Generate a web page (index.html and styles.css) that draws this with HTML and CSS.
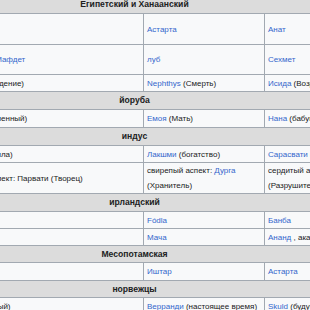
FILE: index.html
```html
<!DOCTYPE html>
<html lang="ru">
<head>
<meta charset="utf-8">
<link rel="stylesheet" href="styles.css">
</head>
<body>
<table class="wikitable">
  <colgroup><col class="col-a"><col class="col-b"><col class="col-c"></colgroup>
  <tbody>
    <tr class="r17"><th colspan="3">Египетский и Ханаанский</th></tr>
    <tr class="r30"><td>Бастет<br>(кошка)</td><td><a href="#">Астарта</a></td><td><a href="#">Анат</a></td></tr>
    <tr class="r29"><td>Бастет, Хатхор, Нейт, <a href="#">Мафдет</a></td><td><a href="#">луб</a></td><td><a href="#">Сехмет</a></td></tr>
    <tr class="r16"><td>Тефнут, или Нейт (Рождение)</td><td><a href="#">Nephthys</a> (Смерть)</td><td><a href="#">Исида</a> (Возрождение)</td></tr>
    <tr class="r17"><th colspan="3">йоруба</th></tr>
    <tr class="r17"><td>Ойя или Оба, (вневременный)</td><td><a href="#">Емоя</a> (Мать)</td><td><a href="#">Нана</a> (бабушка)</td></tr>
    <tr class="r17"><th colspan="3">индус</th></tr>
    <tr class="r16"><td>Шакти, Дурга, Кали (Сила)</td><td><a href="#">Лакшми</a> (богатство)</td><td><a href="#">Сарасвати</a> (мудрость)</td></tr>
    <tr class="r29"><td>доброжелательный аспект: Парвати (Творец)</td><td>свирепый аспект: <a href="#">Дурга</a> (Хранитель)</td><td>сердитый аспект: Кали (Разрушитель)</td></tr>
    <tr class="r17"><th colspan="3">ирландский</th></tr>
    <tr class="r16"><td></td><td><a href="#">Fódla</a></td><td><a href="#">Банба</a></td></tr>
    <tr class="r16"><td></td><td><a href="#">Мача</a></td><td><a href="#">Ананд</a> , ака Морриган</td></tr>
    <tr class="r16"><th colspan="3">Месопотамская</th></tr>
    <tr class="r17"><td></td><td><a href="#">Иштар</a></td><td><a href="#">Астарта</a></td></tr>
    <tr class="r16"><th colspan="3">норвежцы</th></tr>
    <tr class="r17"><td>Урд, это норна (прошлый)</td><td><a href="#">Верранди</a> (настоящее время)</td><td><a href="#">Skuld</a> (будущее)</td></tr>
  </tbody>
</table>
</body>
</html>
```

FILE: styles.css
```css
html, body {
  margin: 0;
  padding: 0;
  overflow: hidden;
  background: #ffffff;
}

body {
  width: 310px;
  height: 310px;
}

.wikitable {
  border-collapse: collapse;
  table-layout: fixed;
  width: 448px;
  margin: -5px 0 0 -90px;
  font-family: "Liberation Sans", Arial, sans-serif;
  font-size: 8px;
  line-height: 15px;
  color: #202122;
  background: #f8f9fa;
}

.col-a { width: 233px; }
.col-b { width: 121px; }
.col-c { width: 94px; }

.wikitable td,
.wikitable th {
  border: 1px solid #a2a9b1;
  padding: 0 3px;
  text-align: left;
  vertical-align: middle;
  overflow: hidden;
}

.wikitable th {
  background: #dcdcdc;
  text-align: center;
  font-weight: bold;
  font-size: 8.6px;
}

.wikitable a {
  color: #3366cc;
  text-decoration: none;
}

.r16 > td, .r16 > th { height: 16px; }
.r17 > td, .r17 > th { height: 17px; }
.r29 > td, .r29 > th { height: 29px; }
.r30 > td, .r30 > th { height: 30px; }
```
